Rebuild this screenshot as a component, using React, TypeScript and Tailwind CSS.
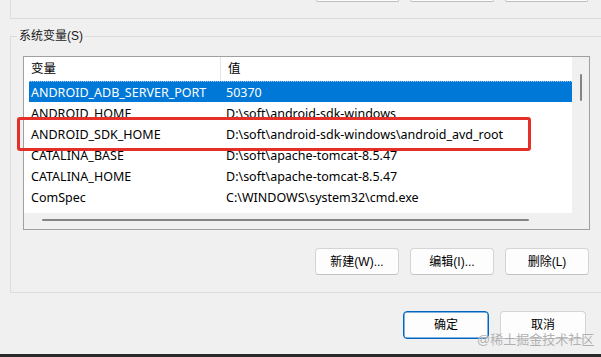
import React from "react";

const rows = [
  { name: "ANDROID_ADB_SERVER_PORT", value: "50370" },
  { name: "ANDROID_HOME", value: "D:\\soft\\android-sdk-windows" },
  { name: "ANDROID_SDK_HOME", value: "D:\\soft\\android-sdk-windows\\android_avd_root" },
  { name: "CATALINA_BASE", value: "D:\\soft\\apache-tomcat-8.5.47" },
  { name: "CATALINA_HOME", value: "D:\\soft\\apache-tomcat-8.5.47" },
  { name: "ComSpec", value: "C:\\WINDOWS\\system32\\cmd.exe" },
];

const font = { fontFamily: '"Liberation Sans", "Noto Sans CJK SC", sans-serif' };
const listFont = { fontFamily: '"Noto Sans", "Noto Sans CJK SC", sans-serif' };

const WinButton: React.FC<{ label: string; primary?: boolean; className?: string }> = ({
  label,
  primary,
  className = "",
}) => (
  <div
    className={`flex items-center justify-center rounded-[4px] text-[12px] text-black ${
      primary
        ? "border border-[#0067c0] bg-[#fdfdfd] shadow-[inset_0_0_0_0.5px_#0067c0]"
        : "border border-[#d4d4d4] border-b-[#c2c2c2] bg-[#fdfdfd]"
    } ${className}`}
  >
    {label}
  </div>
);

export default function App() {
  return (
    <div className="relative w-[601px] h-[357px] overflow-hidden bg-[#f0f0f0] flex flex-col" style={font}>
      {/* Upper group box (only its bottom is visible) */}
      <div className="ml-[10px] w-[600px] h-[19px] border-l border-b border-[#dcdcdc] flex gap-[11px] pl-[305px] shrink-0">
        <div className="w-[83px] h-[2px] border-x border-b border-[#bdbdbd] rounded-b-[3px] bg-[#fdfdfd]" />
        <div className="w-[84px] h-[2px] border-x border-b border-[#bdbdbd] rounded-b-[3px] bg-[#fdfdfd]" />
        <div className="w-[83px] h-[2px] border-x border-b border-[#bdbdbd] rounded-b-[3px] bg-[#fdfdfd]" />
      </div>

      {/* System variables group */}
      <div className="ml-[10px] mt-[17px] w-[600px] h-[257px] border-l border-t border-b border-[#dcdcdc] flex flex-col shrink-0">
        <span className="-mt-[10px] ml-[6px] self-start px-[2px] bg-[#f0f0f0] text-[12px] leading-[18px] text-[#1a1a1a]">
          系统变量(S)
        </span>

        {/* List view */}
        <div className="mt-[11px] ml-[12px] w-[567px] h-[174px] border border-[#a0a0a0] bg-white grid grid-cols-[548px_17px] grid-rows-[156px_16px]">
          <div className="overflow-hidden text-[12.5px] text-black" style={listFont}>
            <div className="h-[24px] flex items-center">
              <div className="w-[197px] h-full flex items-center pl-[7px] border-r border-[#e5e5e5]">变量</div>
              <div className="pl-[7px]">值</div>
            </div>
            {rows.map((r, i) => (
              <div
                key={r.name}
                className={`ml-[5px] h-[21px] pt-[3px] flex items-center whitespace-nowrap ${
                  i === 0 ? "bg-[#0078d7] text-white border-t border-dotted border-[#9cc6ec]" : ""
                }`}
              >
                <span className="w-[197px] pl-[2px]">{r.name}</span>
                <span>{r.value}</span>
              </div>
            ))}
          </div>
          {/* vertical scrollbar */}
          <div className="bg-[#f0f0f0] pt-[17px] flex justify-center">
            <div className="w-[2px] h-[27px] bg-[#858585] rounded-full" />
          </div>
          {/* horizontal scrollbar */}
          <div className="bg-[#f0f0f0] pl-[18px] pt-[6px]">
            <div className="w-[487px] h-[2px] bg-[#858585] rounded-full" />
          </div>
          <div className="bg-[#f0f0f0]" />
        </div>

        <div className="mt-[18px] ml-[304px] flex gap-[11px]">
          <WinButton label="新建(W)..." className="w-[84px] h-[27px]" />
          <WinButton label="编辑(I)..." className="w-[84px] h-[27px]" />
          <WinButton label="删除(L)" className="w-[84px] h-[27px]" />
        </div>
      </div>

      {/* Dialog buttons */}
      <div className="mt-[18px] ml-[403px] flex gap-[11px]">
        <WinButton label="确定" primary className="w-[86px] h-[28px]" />
        <WinButton label="取消" className="w-[86px] h-[28px]" />
      </div>

      <div className="mt-auto h-[3px] bg-[#2a2a2a]" />

      {/* Red annotation box */}
      <div className="absolute left-[17px] top-[117px] w-[514px] h-[34px] border-[3px] border-[#e5302a] rounded-[3px]" />

      {/* Watermark */}
      <div
        className="absolute left-[477px] top-[332px] text-[13px] leading-[15px] text-[#a9a9a9] opacity-90"
        style={{ textShadow: "0 0 1px #ffffff" }}
      >
        @稀土掘金技术社区
      </div>
    </div>
  );
}
